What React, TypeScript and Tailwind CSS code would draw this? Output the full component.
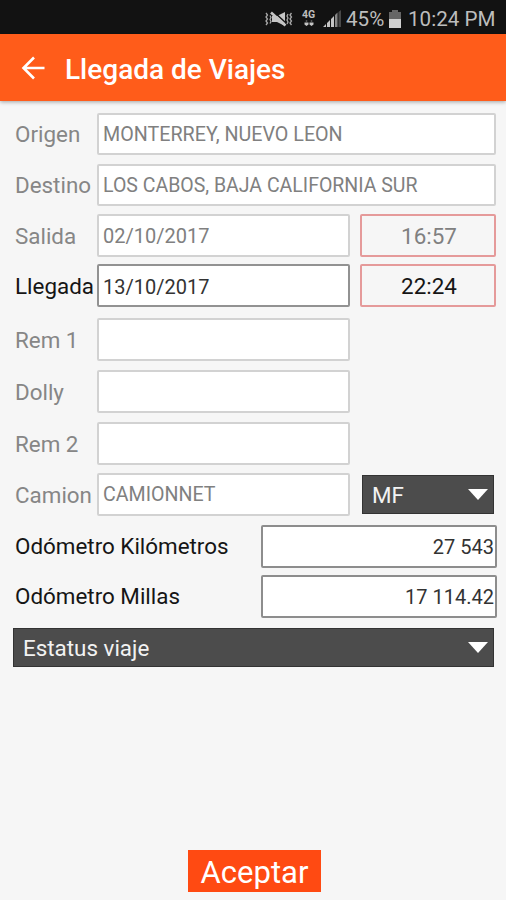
import type { ReactNode } from 'react';
import clsx from 'clsx';

function MutedIcon() {
  return (
    <svg width="28" height="18" viewBox="0 0 28 18" aria-hidden="true">
      <path d="M7 6h5l8-4v14l-8-4H7z" fill="#c4c4c4" />
      <path d="M8.500 1.500l13 12" stroke="#121212" strokeWidth="1.500" />
      <path d="M6 2.500l14.500 13" stroke="#c4c4c4" strokeWidth="2.600" />
      <path
        d="M1 3l1.500 2L1 7l1.500 2L1 11l1.500 2L1 15M5 5.500L6 7.500l-1 2 1 2-1 2M23 4l-1 2 1 2-1 2 1 2-1 2M26.500 3L25 5l1.500 2L25 9l1.500 2-1.500 2 1.500 2"
        fill="none"
        stroke="#a8a8a8"
        strokeWidth="1.300"
      />
    </svg>
  );
}

function NetworkIcon() {
  return (
    <span className="flex w-[15px] flex-col items-center">
      <span className="text-[10.5px] leading-[9px] font-bold">4G</span>
      <svg width="10" height="8" viewBox="0 0 10 8" aria-hidden="true">
        <path d="M2.500 1v2M7.500 1v2" stroke="#555" strokeWidth="1.500" />
        <path d="M.5 3.500h4v2l-2 1.500-2-1.500zM5.500 3.500h4v2l-2 1.500-2-1.500z" fill="#c4c4c4" />
      </svg>
    </span>
  );
}

function SignalIcon() {
  return (
    <svg width="19" height="19" viewBox="0 0 19 19" aria-hidden="true">
      <path d="M0 18h3v-3zM4 18h3v-7l-3 3zM8 18h3V7L8 10z" fill="#c4c4c4" />
      <path d="M12 18h2.500V3.500L12 6z" fill="#888" />
      <path d="M15.500 18H18V1l-2.500 2z" fill="#484848" />
    </svg>
  );
}

function BatteryIcon() {
  return (
    <svg width="12" height="18" viewBox="0 0 12 18" aria-hidden="true">
      <path d="M3 0h6v2h3v8H0V2h3z" fill="#666" />
      <path d="M0 9h12v9H0z" fill="#d0d0d0" />
    </svg>
  );
}

function StatusBar() {
  return (
    <div className="flex h-[34px] shrink-0 items-center bg-[#121212] pt-[3px] pl-[265px] whitespace-nowrap text-[#bdbdbd]">
      <MutedIcon />
      <span className="ml-[8px]">
        <NetworkIcon />
      </span>
      <span className="ml-[7px]">
        <SignalIcon />
      </span>
      <span className="ml-[4px] w-[39px] pt-[2px] text-[20.6px]">45%</span>
      <span className="ml-[4px]">
        <BatteryIcon />
      </span>
      <span className="ml-[7px] pt-[2px] text-[20.6px]">10:24 PM</span>
    </div>
  );
}

function Label({ children, active }: { children: ReactNode; active?: boolean }) {
  return (
    <span className={clsx('w-[82px] shrink-0 pt-[2px] text-[22.4px] whitespace-nowrap', active ? 'text-[#151515]' : 'text-[#868686]')}>
      {children}
    </span>
  );
}

function Field({ value, active, className }: { value?: string; active?: boolean; className?: string }) {
  return (
    <div
      className={clsx(
        'flex h-full items-center rounded-[2px] border-2 bg-white pl-[4px] whitespace-nowrap',
        active ? 'border-[#929292] text-[#333]' : 'border-[#d2d2d2] text-[#808080]',
        className,
      )}
    >
      {value}
    </div>
  );
}

function Time({ value, active }: { value: string; active?: boolean }) {
  return (
    <div
      className={clsx(
        'ml-[10px] flex h-[43px] w-[136px] items-center justify-center rounded-[2px] border-2 border-[#e59a9a] pt-[2px] pl-[2px] text-[22.4px]',
        active ? 'text-[#151515]' : 'text-[#808080]',
      )}
    >
      {value}
    </div>
  );
}

function Spinner({ value, className }: { value: string; className?: string }) {
  return (
    <div className={clsx('flex h-[39px] items-center justify-between border border-[#333] bg-[#4c4c4c] pr-[5px] pl-[9px] text-[22.4px] text-[#f2f2f2]', className)}>
      <span className="pt-[2px]">{value}</span>
      <svg width="20" height="12" viewBox="0 0 20 12" aria-hidden="true">
        <path d="M0 0h20l-10 11z" fill="#fff" />
      </svg>
    </div>
  );
}

function Odometer({ label, value, className }: { label: string; value: string; className?: string }) {
  return (
    <div className={clsx('flex h-[43px] items-center justify-between pr-[9px] pl-[15px]', className)}>
      <span className="pt-[1px] text-[22.4px] text-[#151515]">{label}</span>
      <div className="flex h-[43px] w-[236px] items-center justify-end rounded-[2px] border-2 border-[#8d8d8d] bg-white pr-[1px] text-[20px] text-[#333]">
        {value}
      </div>
    </div>
  );
}

export default function App() {
  return (
    <div className="flex h-[900px] w-[506px] flex-col overflow-hidden bg-[#f6f6f6] font-[Roboto,sans-serif]">
      <StatusBar />
      <header className="flex h-[67px] shrink-0 items-center bg-[#ff5c1a] pl-[21px] text-white shadow-[0_1px_4px_rgba(0,0,0,0.35)]">
        <svg width="24" height="24" viewBox="0 0 24 24" fill="none" stroke="currentColor" strokeWidth="2.600" aria-hidden="true">
          <path d="M23.500 12H3M13 1.500L2.500 12 13 22.500" />
        </svg>
        <h1 className="ml-[20px] pt-[4px] text-[28px] font-medium">Llegada de Viajes</h1>
      </header>

      <main className="flex flex-1 flex-col pt-[12px]">
        <div className="flex h-[42px] items-center pl-[15px]">
          <Label>Origen</Label>
          <Field value="MONTERREY, NUEVO LEON" className="w-[399px] pt-[2px] text-[19.7px]" />
        </div>
        <div className="mt-[9px] flex h-[42px] items-center pl-[15px]">
          <Label>Destino</Label>
          <Field value="LOS CABOS, BAJA CALIFORNIA SUR" className="w-[399px] pt-[2px] text-[19.5px]" />
        </div>
        <div className="mt-[8px] flex h-[43px] items-center pl-[15px]">
          <Label>Salida</Label>
          <Field value="02/10/2017" className="w-[253px] text-[20px]" />
          <Time value="16:57" />
        </div>
        <div className="mt-[7px] flex h-[43px] items-center pl-[15px]">
          <Label active>Llegada</Label>
          <Field value="13/10/2017" active className="w-[253px] pt-[2px] text-[20px]" />
          <Time value="22:24" active />
        </div>
        <div className="mt-[11px] flex h-[43px] items-center pl-[15px]">
          <Label>Rem 1</Label>
          <Field className="w-[253px]" />
        </div>
        <div className="mt-[9px] flex h-[43px] items-center pl-[15px]">
          <Label>Dolly</Label>
          <Field className="w-[253px]" />
        </div>
        <div className="mt-[9px] flex h-[43px] items-center pl-[15px]">
          <Label>Rem 2</Label>
          <Field className="w-[253px]" />
        </div>
        <div className="mt-[8px] flex h-[43px] items-center pl-[15px]">
          <Label>Camion</Label>
          <Field value="CAMIONNET" className="w-[253px] text-[19.6px]" />
          <Spinner value="MF" className="ml-[12px] w-[132px]" />
        </div>
        <Odometer label="Odómetro Kilómetros" value="27 543" className="mt-[9px]" />
        <Odometer label="Odómetro Millas" value="17 114.42" className="mt-[7px]" />
        <Spinner value="Estatus viaje" className="mt-[10px] mr-[12px] ml-[13px]" />
        <button type="button" className="mt-auto mb-[8px] ml-[188px] h-[42px] w-[133px] bg-[#ff4a12] pt-[2px] text-[31px] leading-[42px] text-white">
          Aceptar
        </button>
      </main>
    </div>
  );
}
